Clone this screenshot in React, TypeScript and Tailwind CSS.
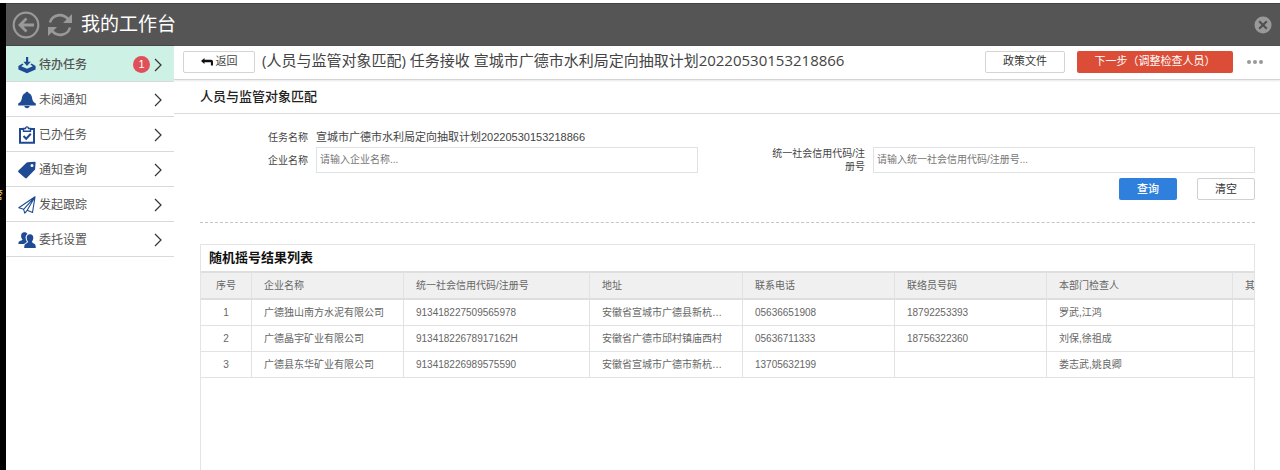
import { useState } from 'react';
import type { ReactNode } from 'react';
import clsx from 'clsx';

const InboxIcon = () => (
  <svg viewBox="0 0 18 18" className="h-[18px] w-[18px] shrink-0" fill="#1f4a94">
    <path d="M8 1h2.200v4.800h2.600L9 10 5.400 5.800H8z" />
    <path d="M4.400 7.400.4 10v3.600L9 17.200l8.600-3.600V10l-4-2.600-1.200 1 2.400 1.900L9 12.700l-5.800-2.400 2.400-1.900z" />
  </svg>
);

const BellIcon = () => (
  <svg viewBox="0 0 18 18" className="h-[18px] w-[18px] shrink-0" fill="#1f4a94">
    <path d="M9 .8c1 0 1.500.6 1.500 1.300 2.300.8 3.300 2.700 3.700 5.400.3 2.400 1.300 3.800 3.600 4.900v2H.2v-2c2.300-1.100 3.300-2.500 3.600-4.900.4-2.700 1.400-4.600 3.700-5.400C7.500 1.400 8 .8 9 .8z" />
    <path d="M6.300 15h5.400c-.3 1.400-1.300 2.200-2.700 2.200S6.600 16.400 6.300 15z" />
  </svg>
);

const ClipboardIcon = () => (
  <svg viewBox="0 0 18 18" className="h-[18px] w-[18px] shrink-0" fill="none" stroke="#1f4a94" strokeWidth="2">
    <path d="M5 3H2v13.800h14V3h-3" />
    <path d="M5.500 2.500h2C7.600 1.200 8 .9 9 .9s1.400.3 1.500 1.600h2v2.700h-7z" strokeWidth="1.400" />
    <path d="m5.500 10 2.700 2.800 4.600-5" />
  </svg>
);

const TagIcon = () => (
  <svg viewBox="0 0 18 18" className="h-[18px] w-[18px] shrink-0" fill="#1f4a94">
    <path
      fillRule="evenodd"
      d="M9.500 1.300 16.600.7c.6 0 1 .4 1 1l-.5 6.200c0 .5-.2.800-.5 1.200l-7.800 8c-.5.5-1.200.5-1.700 0L.5 11.200c-.5-.5-.5-1.200 0-1.700l7.700-7.600c.4-.4.800-.6 1.300-.6zM14 2.900a1.500 1.500 0 1 0 0 3 1.500 1.500 0 0 0 0-3z"
    />
  </svg>
);

const PlaneIcon = () => (
  <svg viewBox="0 0 18 18" className="h-[18px] w-[18px] shrink-0" fill="none" stroke="#1f4a94" strokeWidth="1.100" strokeLinejoin="round">
    <path d="M17 .8.8 11.800l4.800 1.500zM17 .8 5.600 13.300l1.200 3.900 2.400-2.900zM17 .8 9.200 14.300l5.300 2.200z" />
  </svg>
);

const UsersIcon = () => (
  <svg viewBox="0 0 18 18" className="h-[18px] w-[18px] shrink-0" fill="#1f4a94">
    <path d="M6.200 1.300c1.700 0 2.800.6 3.200 1.700-1.700 1.200-2.200 3.200-1.500 5.500.2.700.5 1.200.9 1.700l-.1 1L6 13H.4c0-2 .5-2.700 2-3.200 1.400-.4 2-.7 2-1.500-.8-.8-1.300-1.900-1.300-3.400 0-2.200 1.200-3.600 3.100-3.600z" />
    <path d="M12 3.200c2.200 0 3.300 1.500 3.300 3.500 0 1.500-.5 2.800-1.300 3.600 0 1.200.5 1.700 1.700 2.100 1.500.5 2.100 1.500 2.100 4.600H6.200c0-3.100.6-4.100 2.100-4.600 1.200-.4 1.700-.9 1.700-2.100-.8-.8-1.300-2.100-1.300-3.600 0-2 1.100-3.500 3.300-3.500z" />
  </svg>
);

const Chevron = () => (
  <svg viewBox="0 0 8 14" className="h-[14px] w-2 shrink-0" fill="none" stroke="#333" strokeWidth="1.200">
    <path d="m1 1 6 6-6 6" />
  </svg>
);

interface MenuItem {
  label: string;
  icon: ReactNode;
  badge?: number;
}

const menu: MenuItem[] = [
  { label: '待办任务', icon: <InboxIcon />, badge: 1 },
  { label: '未阅通知', icon: <BellIcon /> },
  { label: '已办任务', icon: <ClipboardIcon /> },
  { label: '通知查询', icon: <TagIcon /> },
  { label: '发起跟踪', icon: <PlaneIcon /> },
  { label: '委托设置', icon: <UsersIcon /> },
];

const columns = ['序号', '企业名称', '统一社会信用代码/注册号', '地址', '联系电话', '联络员号码', '本部门检查人', '其他部门检查人'];

const rows = [
  ['1', '广德独山南方水泥有限公司', '913418227509565978', '安徽省宣城市广德县新杭镇独山村', '05636651908', '18792253393', '罗武,江鸿', ''],
  ['2', '广德晶宇矿业有限公司', '91341822678917162H', '安徽省广德市邱村镇庙西村', '05636711333', '18756322360', '刘保,徐祖成', ''],
  ['3', '广德县东华矿业有限公司', '913418226989575590', '安徽省宣城市广德市新杭镇路东村', '13705632199', '', '娄志武,姚良卿', ''],
];

function Header() {
  return (
    <header className="flex h-[43px] items-center border-t border-b border-[#444] bg-[#555] pr-2 pl-[6px]">
      <button type="button" aria-label="后退">
        <svg viewBox="0 0 28 28" className="h-7 w-7" fill="none" stroke="#999" strokeWidth="2.200">
          <circle cx="14" cy="14" r="12.300" />
          <path d="M22 14H8M14.500 7.500 8 14l6.500 6.500" strokeWidth="2.800" />
        </svg>
      </button>
      <button type="button" aria-label="刷新" className="ml-2">
        <svg viewBox="0 0 24 24" className="h-6 w-6" fill="none" stroke="#999" strokeWidth="2.600">
          <path d="M2 9.500C4.200 1.500 14.500-.5 20.200 6.300" />
          <path d="M22 14.500c-2.200 8-12.500 10-18.200 3.200" />
          <path d="M24 1v9h-9zM0 23v-9h9z" fill="#999" stroke="none" />
        </svg>
      </button>
      <h1 className="ml-[9px] text-[19px] leading-6 text-white">我的工作台</h1>
      <button type="button" aria-label="关闭" className="ml-auto">
        <svg viewBox="0 0 18 18" className="h-[18px] w-[18px]">
          <circle cx="9" cy="9" r="8.500" fill="#999" />
          <path d="m5.200 5.200 7.600 7.600M12.800 5.200l-7.600 7.600" stroke="#505050" strokeWidth="2.200" />
        </svg>
      </button>
    </header>
  );
}

function Sidebar() {
  const [active, setActive] = useState('待办任务');

  return (
    <nav className="w-[168px] shrink-0">
      {menu.map((item) => (
        <a
          key={item.label}
          href="#"
          onClick={() => setActive(item.label)}
          className={clsx(
            'flex h-[35px] items-center border-b border-[#d9d9d9] pt-[2px] pr-3 pl-3 text-xs text-[#555] first:h-9',
            active === item.label && 'bg-[#cef1e5] font-medium'
          )}
        >
          {item.icon}
          <span className="ml-[3px]">{item.label}</span>
          {item.badge && (
            <span className="ml-auto flex h-[17px] w-[17px] items-center justify-center rounded-full bg-[#e0505a] text-[11px] font-normal text-white">
              {item.badge}
            </span>
          )}
          <span className={item.badge ? 'ml-1' : 'ml-auto'}>
            <Chevron />
          </span>
        </a>
      ))}
    </nav>
  );
}

function Toolbar() {
  return (
    <div className="flex h-[34px] items-center border-b border-[#d4d4d4] pr-[17px] pb-[2px] pl-[9px] shadow-[0_1px_2px_#e8e8e8]">
      <button type="button" className="flex h-[22px] w-[72px] items-center justify-center gap-[3px] rounded-xs border border-[#d4d4d4] text-[11px] text-[#444]">
        <svg viewBox="0 0 12 8" className="h-2 w-3" fill="#111">
          <path d="M0 3 3.500 0v1.800H10c1.300 0 2 .7 2 2v3.700H9.900V4.300H3.500V6z" />
        </svg>
        返回
      </button>
      <h2 className="ml-[7px] pb-1 font-['Open_Sans','Noto_Sans_CJK_SC',sans-serif] text-[15px] leading-5 text-[#444]">
        (人员与监管对象匹配) 任务接收 宣城市广德市水利局定向抽取计划20220530153218866
      </h2>
      <button type="button" className="ml-auto h-[22px] w-20 rounded-xs border border-[#d4d4d4] text-[11px] text-[#333]">
        政策文件
      </button>
      <button type="button" className="ml-3 h-[22px] w-[156px] rounded-xs bg-[#dc4d37] text-[11px] text-white">
        下一步（调整检查人员）
      </button>
      <button type="button" aria-label="更多" className="ml-[14px] flex gap-[2px]">
        <span className="h-1 w-1 rounded-full bg-[#999]" />
        <span className="h-1 w-1 rounded-full bg-[#999]" />
        <span className="h-1 w-1 rounded-full bg-[#999]" />
      </button>
    </div>
  );
}

function SearchForm() {
  const inputClass = 'h-[26px] min-w-0 flex-1 border border-[#dfe1e4] px-[3px] pb-[2px] text-[10px] text-[#444] outline-none placeholder:text-[#777]';

  return (
    <form className="border-b border-dashed border-[#c4c4cc] pb-[22px]" onSubmit={(e) => e.preventDefault()}>
      <div className="flex h-[18px] items-center gap-2">
        <span className="w-[108px] text-right text-[10px] text-[#444]">任务名称</span>
        <span className="text-[11px] text-[#444]">宣城市广德市水利局定向抽取计划20220530153218866</span>
      </div>
      <div className="mt-px grid grid-cols-2 gap-x-[59px]">
        <div className="flex items-center gap-2">
          <label htmlFor="company" className="w-[108px] shrink-0 text-right text-[10px] text-[#444]">企业名称</label>
          <input id="company" type="text" placeholder="请输入企业名称..." className={inputClass} />
        </div>
        <div className="flex items-center gap-2">
          <label htmlFor="credit-code" className="w-[108px] shrink-0 pl-2 text-right text-[10px] leading-[13px] text-[#444]">
            统一社会信用代码/注册号
          </label>
          <input id="credit-code" type="text" placeholder="请输入统一社会信用代码/注册号..." className={inputClass} />
        </div>
      </div>
      <div className="mt-[5px] flex justify-end gap-5">
        <button type="submit" className="h-[22px] w-[58px] rounded-xs bg-[#2e80dc] text-[11px] font-medium text-white">查询</button>
        <button type="reset" className="h-[22px] w-[58px] rounded-xs border border-[#d0d0d0] text-[11px] text-[#333]">清空</button>
      </div>
    </form>
  );
}

function ResultTable() {
  return (
    <section className="mt-[21px] flex-1 overflow-hidden border-x border-t border-[#e4e4e4]">
      <h3 className="h-[26px] pl-2 text-[13px] leading-[26px] font-bold text-[#111]">随机摇号结果列表</h3>
      <table className="w-[1219px] table-fixed border-separate border-spacing-0 text-left text-[10px] text-[#666]">
        <colgroup>
          <col className="w-[51px]" />
          <col className="w-[152px]" />
          <col className="w-[186px]" />
          <col className="w-[153px]" />
          <col className="w-[152px]" />
          <col className="w-[152px]" />
          <col className="w-[186px]" />
          <col className="w-[187px]" />
        </colgroup>
        <thead>
          <tr className="bg-[#f0f0f0]">
            {columns.map((name) => (
              <th key={name} className="h-[29px] truncate border-y-2 border-r border-y-[#dedede] border-r-[#e2e2e2] px-3 font-normal first:text-center">
                {name}
              </th>
            ))}
          </tr>
        </thead>
        <tbody>
          {rows.map((row) => (
            <tr key={row[0]}>
              {row.map((cell, i) => (
                <td key={i} className="h-[26px] truncate border-r border-b border-[#e2e2e2] px-3 first:text-center">
                  {cell}
                </td>
              ))}
            </tr>
          ))}
        </tbody>
      </table>
    </section>
  );
}

export default function App() {
  return (
    <div className="flex min-h-screen bg-white pt-[3px] font-['Liberation_Sans','Noto_Sans_CJK_SC',sans-serif]">
      {/* edge of the desktop behind the window */}
      <div className="w-[6px] shrink-0 bg-black pt-[184px]">
        <div className="flex w-[3px] justify-end overflow-hidden text-[11px] text-[#e8c860]">
          <span>管</span>
        </div>
      </div>
      <div className="flex min-w-0 flex-1 flex-col">
        <Header />
        <div className="flex flex-1">
          <Sidebar />
          <main className="flex min-w-0 flex-1 flex-col">
            <Toolbar />
            <h2 className="h-[34px] border-b border-[#dcdcdc] pl-[26px] text-[13px] leading-[33px] font-medium text-[#222]">
              人员与监管对象匹配
            </h2>
            <div className="flex flex-1 flex-col pt-[14px] pr-[25px] pl-[26px]">
              <SearchForm />
              <ResultTable />
            </div>
          </main>
        </div>
      </div>
    </div>
  );
}
